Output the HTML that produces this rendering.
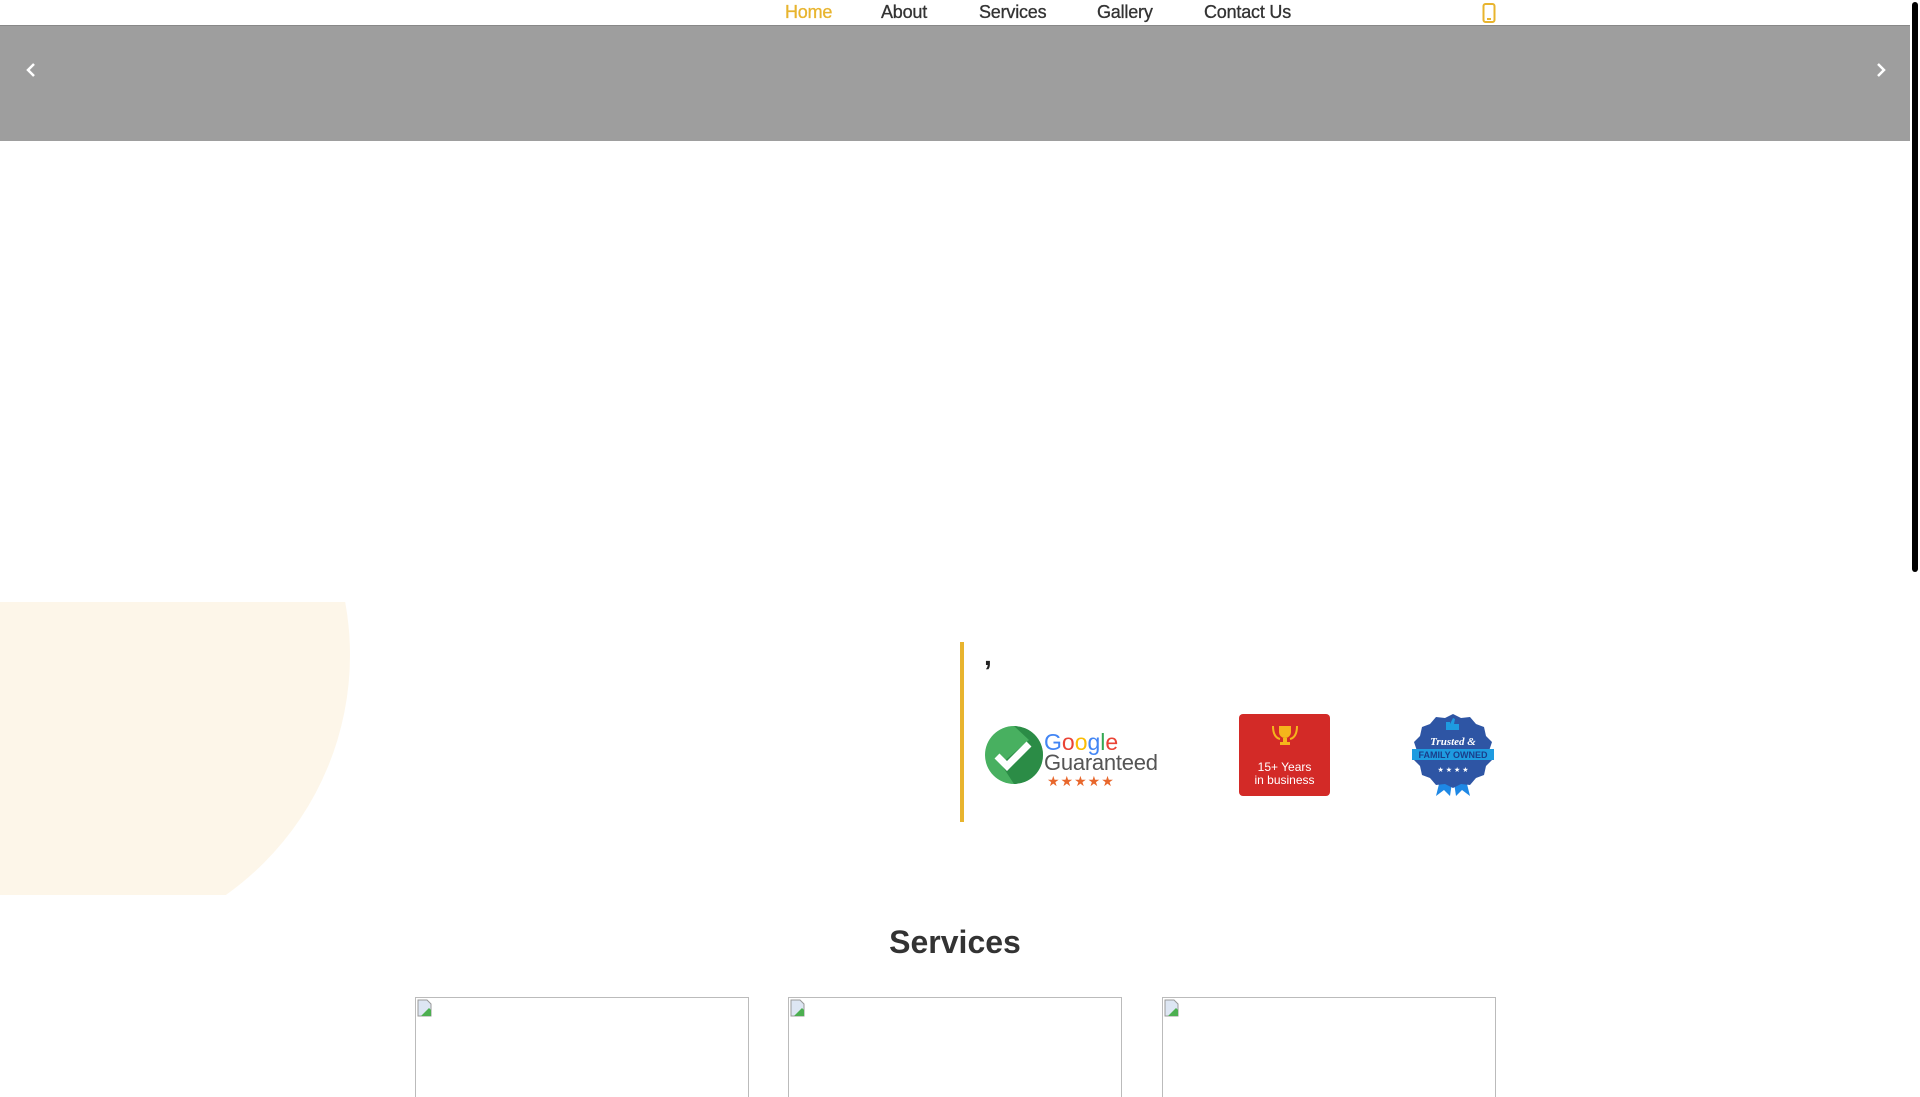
<!DOCTYPE html>
<html><head><meta charset="utf-8"><style>
*{margin:0;padding:0;box-sizing:border-box}
body{width:1920px;height:1080px;overflow:hidden;background:#fff;font-family:"Liberation Sans",sans-serif;position:relative}
.nav{position:absolute;top:0;left:0;width:1910px;height:26px;border-bottom:1px solid #888;background:#fff}
.nav a{position:absolute;top:2px;font-size:18px;color:#333;text-decoration:none;letter-spacing:-0.2px;-webkit-text-stroke:0.3px}
.hero{position:absolute;top:26px;left:0;width:1910px;height:115px;background:#9e9e9e}
.arrow{position:absolute;top:37px;width:14px;height:14px}
.sb{position:absolute;right:0;top:0;width:10px;height:1080px;background:#fff}
.sb div{position:absolute;left:2px;top:2px;width:6px;height:570px;background:#000;border-radius:3px}
.card{position:absolute;top:997px;width:334px;height:100px;border:1px solid #bbb;border-bottom:none}
.card svg{position:absolute;left:1px;top:1px}
h2{position:absolute;top:924px;left:0;width:1910px;text-align:center;font-size:32px;color:#333;font-weight:bold}
</style></head><body>
<div class="nav">
<a style="left:785px;color:#e8b42e">Home</a>
<a style="left:881px">About</a>
<a style="left:979px">Services</a>
<a style="left:1097px">Gallery</a>
<a style="left:1204px">Contact Us</a>
<svg style="position:absolute;left:1482px;top:3px" width="14" height="20" viewBox="0 0 14 20"><rect x="1.5" y="1" width="11" height="18" rx="2" fill="none" stroke="#e8b42e" stroke-width="2"/><rect x="5" y="15" width="4" height="2" fill="#e8b42e"/></svg>
</div>
<div class="hero">
<svg class="arrow" style="left:24px" viewBox="0 0 14 14"><path d="M10 1L4 7l6 6" fill="none" stroke="#fff" stroke-width="2.5"/></svg>
<svg class="arrow" style="left:1874px" viewBox="0 0 14 14"><path d="M4 1l6 6-6 6" fill="none" stroke="#fff" stroke-width="2.5"/></svg>
</div>
<svg style="position:absolute;left:0;top:602px" width="360" height="293"><clipPath id="c"><rect x="0" y="0" width="360" height="293"/></clipPath><circle cx="56" cy="53" r="294" fill="#fdf6e9" clip-path="url(#c)"/><rect x="0" y="0" width="60" height="293" fill="#fdf6e9"/></svg>
<div style="position:absolute;left:960px;top:642px;width:4px;height:180px;background:#e8b42e"></div>
<div style="position:absolute;left:984px;top:640px;font-size:28px;font-weight:bold;color:#222">,</div>
<svg style="position:absolute;left:983px;top:722px" width="180" height="66" viewBox="0 0 180 66">
<circle cx="31" cy="33" r="29" fill="#48b060"/><path d="M31 4a29 29 0 0 1 0 58L18 42l28-24z" fill="#1f7d3c" opacity=".7"/>
<path d="M14 34l10 10 22-22" fill="none" stroke="#fff" stroke-width="7"/>
<text x="61" y="28" font-size="23" font-family="Liberation Sans" fill="#4285f4">G<tspan fill="#ea4335">o</tspan><tspan fill="#fbbc05">o</tspan><tspan fill="#4285f4">g</tspan><tspan fill="#34a853">l</tspan><tspan fill="#ea4335">e</tspan></text>
<text x="61" y="48" font-size="22" font-family="Liberation Sans" fill="#555" textLength="114">Guaranteed</text>
<text x="64" y="64" font-size="14" fill="#e8672c" letter-spacing="1">★★★★★</text>
</svg>
<div style="position:absolute;left:1239px;top:714px;width:91px;height:82px;background:#d32a27;border-radius:4px;color:#fff;font-size:12px;text-align:center;line-height:13px;padding-top:47px">15+ Years<br>in business
<svg style="position:absolute;left:30px;top:10px" width="32" height="24" viewBox="0 0 32 24"><path d="M10 2h12v6a6 6 0 0 1-12 0zM14 14h4v4h3v3H11v-3h3z" fill="#f5b51b"/><path d="M4 2c0 8 3 12 7 13M28 2c0 8-3 12-7 13" fill="none" stroke="#f5b51b" stroke-width="2"/></svg></div>
<svg style="position:absolute;left:1408px;top:712px" width="90" height="86" viewBox="0 0 90 86">
<path d="M34 60l-6 24 8-6 6 6 3-20zM56 60l6 24-8-6-6 6-3-20z" fill="#1e88e5"/>
<path d="M45 2l8 4 9-1 6 7 8 3 2 9 6 6-3 9 3 9-6 6-2 9-8 3-6 7-9-1-8 4-8-4-9 1-6-7-8-3-2-9-6-6 3-9-3-9 6-6 2-9 8-3 6-7 9 1z" fill="#2e55a4"/>
<rect x="4" y="37" width="82" height="11" fill="#1e9be0"/>
<path d="M38 10h4v8h-4zM42 12l3-6 2 1-1 5h5v6h-9z" fill="#1e9be0"/>
<text x="45" y="33" font-size="11" font-style="italic" font-weight="bold" fill="#fff" text-anchor="middle" font-family="Liberation Serif">Trusted &amp;</text>
<text x="45" y="46" font-size="9" font-weight="bold" fill="#1a3d8a" text-anchor="middle">FAMILY OWNED</text>
<text x="45" y="60" font-size="7" fill="#fff" text-anchor="middle">★ ★ ★ ★</text>
</svg>
<h2>Services</h2>
<div class="card" style="left:415px"><svg width="16" height="18" viewBox="0 0 16 18"><path d="M1 1h9l4 4v12H1z" fill="#dde6f3" stroke="#999"/><path d="M4 17l8-8 2 2v6z" fill="#4caf50"/></svg></div>
<div class="card" style="left:788px"><svg width="16" height="18" viewBox="0 0 16 18"><path d="M1 1h9l4 4v12H1z" fill="#dde6f3" stroke="#999"/><path d="M4 17l8-8 2 2v6z" fill="#4caf50"/></svg></div>
<div class="card" style="left:1162px"><svg width="16" height="18" viewBox="0 0 16 18"><path d="M1 1h9l4 4v12H1z" fill="#dde6f3" stroke="#999"/><path d="M4 17l8-8 2 2v6z" fill="#4caf50"/></svg></div>
<div class="sb"><div></div></div>
</body></html>
